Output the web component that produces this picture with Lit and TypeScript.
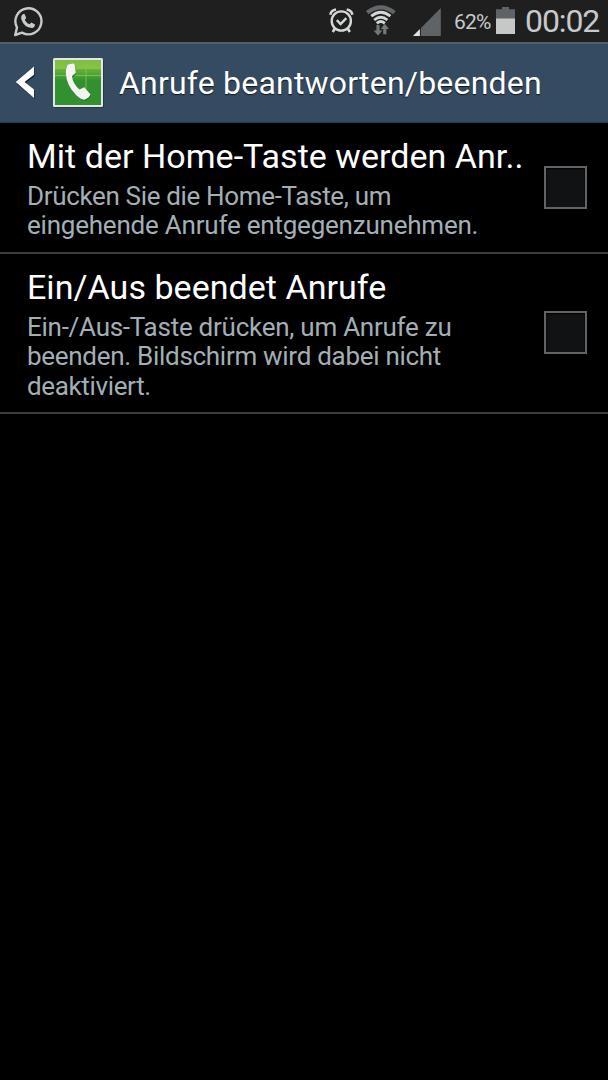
import { LitElement, html, css } from "lit";
import { customElement, property } from "lit/decorators.js";

@customElement("status-bar")
class StatusBar extends LitElement {
  static styles = css`
    :host { display: flex; align-items: flex-start; height: 42px; background: #1f1f1f; color: #c6cacb; }
    svg { display: block; flex: none; }
    .chat { margin: 5px 0 0 12px; }
    .alarm { margin: 7px 0 0 auto; }
    .wifi { margin: 5px 0 0 11px; }
    .signal { margin: 8px 0 0 15px; }
    .percent { width: 37px; margin: 10px 0 0 13px; font-size: 21px; line-height: 25px; letter-spacing: -0.8px; white-space: nowrap; }
    .battery { margin: 7px 0 0 5px; }
    .clock { width: 83px; margin: 2px 0 0 9px; font-size: 32px; line-height: 38px; white-space: nowrap; letter-spacing: -1.1px; }
  `;
  render() {
    return html`
      <svg class="chat" width="32" height="32" viewBox="0 0 32 32" fill="none" stroke="#c6cacb">
        <path d="M3.2 30 L5 22.5 A13 13 0 1 1 10 27.6 Z" stroke-width="2.4" stroke-linejoin="round" />
        <path d="M10.3 9.5 L12.4 8.8 L14.2 12.8 L12.8 15 Q14.3 18 17.6 19.3 L19.4 17.6 L23 19.5 Q22.8 22.7 19.8 23 Q12 22.5 9.2 14 Q8.8 11 10.3 9.5Z" fill="#c6cacb" stroke="none" />
      </svg>
      <svg class="alarm" width="26" height="28" viewBox="0 0 26 28" fill="none" stroke="#d3d7d7">
        <circle cx="12.3" cy="14" r="9.6" stroke-width="2.4" />
        <path d="M7.8 13.2 L11.6 17 L17.3 11.1" stroke-width="2.4" />
        <path d="M1.3 7.7 Q2.2 3.3 7 2.5 M23.4 7.7 Q22.5 3.3 17.7 2.5" stroke-width="2.6" />
        <path d="M5.8 21.5 L3.8 25 M18.8 21.5 L20.8 25" stroke-width="2.6" />
      </svg>
      <svg class="wifi" width="32" height="34" viewBox="0 0 32 34" fill="none">
        <path d="M1.2 7.6 Q14.8 -2.9 28.4 7.6" stroke="#63676a" stroke-width="4" />
        <g stroke="#d3d7d7" stroke-width="2.9">
          <path d="M5.2 11.2 Q14.8 3.4 24.4 11.2" />
          <path d="M8.2 15 Q14.8 9.4 21.4 15" />
          <path d="M10.8 18.4 Q14.8 14.8 18.8 18.4" />
        </g>
        <path d="M10.4 20h3.2v5.4h2.8l-4.4 5.2-4.4-5.2h2.8zM17.2 29.2v-5.2h-2.6l4.2-5.2 4.2 5.2h-2.6v5.2z" fill="#74787a" />
      </svg>
      <svg class="signal" width="28" height="29" viewBox="0 0 28 29">
        <path d="M0 28 L27.8 0 V28Z" fill="#606365" />
        <path d="M0 28 L7 21 V28Z" fill="#e0e2e2" />
        <path d="M7.4 20V28" stroke="#1f1f1f" />
      </svg>
      <span class="percent">62%</span>
      <svg class="battery" width="20" height="28" viewBox="0 0 20 28">
        <path d="M0 2.3H6V0H13V2.3H19V12H0Z" fill="#606365" />
        <path d="M0 11.5H19V27H0Z" fill="#c6c8c8" />
      </svg>
      <span class="clock">00:02</span>
    `;
  }
}

@customElement("title-bar")
class TitleBar extends LitElement {
  @property() heading = "";
  static styles = css`
    :host { display: flex; align-items: flex-start; box-sizing: border-box; height: 81px; background: #354b61; border-top: 2px solid #525e68; border-bottom: 1px solid #25384b; }
    svg { display: block; flex: none; }
    .back { margin: 21px 0 0 15px; }
    .app { margin: 13px 0 0 17px; }
    .heading { margin: 19px 0 0 15px; color: #fff; font-size: 32px; line-height: 40px; letter-spacing: 0.2px; white-space: nowrap; text-shadow: 0 1px 1px #101820; }
  `;
  render() {
    return html`
      <svg class="back" width="21" height="35" viewBox="0 0 21 35">
        <path d="M19.6 2.8 V11 L10.5 18.2 L19.6 25.5 V34 L1.4 18.2Z" fill="#18222d" />
        <path d="M19 1.5 V9.7 L9.5 17 L19 24.6 V33 L.8 17Z" fill="#fff" />
      </svg>
      <svg class="app" width="51" height="52" viewBox="0 0 51 52">
        <defs>
          <linearGradient id="top" x2="0" y2="1"><stop stop-color="#7fbd44" /><stop offset="1" stop-color="#86c545" /></linearGradient>
          <linearGradient id="mid" x2="0" y2="1"><stop stop-color="#6ab23c" /><stop offset="1" stop-color="#359330" /></linearGradient>
        </defs>
        <rect x="1" y="2" width="50" height="49" rx="2" fill="#263747" />
        <rect x="0" y="1" width="50" height="49" rx="1.5" fill="#e4e6e3" />
        <rect x="2" y="3" width="46" height="45" fill="#339030" />
        <rect x="2" y="3" width="46" height="10" fill="url(#top)" />
        <rect x="2" y="12" width="46" height="11" fill="url(#mid)" />
        <path d="M2 18.5H48 M33 7V41" stroke="#8bcc4c" stroke-width="1" opacity=".75" />
        <path d="M15 8 L20.5 7 Q22 7 22.2 9 L23 17 L19.5 20.5 Q20.5 28 26.8 33.5 L31.5 31.5 L37.5 38 Q38 39.5 36.5 41 L33 43.5 Q29 44.5 23.5 39 Q13.5 29 12.8 16 Q12.6 10 15 8Z" fill="#24772a" />
        <path d="M15 7.5 L20 6.5 Q21.5 6.5 21.8 8 L22.8 16 L19 19 Q19.8 27 26.5 32.5 L31.3 30.3 L37.5 37.5 L35.5 40.5 L32 42.5 Q28.5 43.5 23 38 Q13.3 28 12.8 16 Q12.8 10 15 7.5Z" fill="#f4f5f3" />
      </svg>
      <span class="heading">${this.heading}</span>
    `;
  }
}

@customElement("check-row")
class CheckRow extends LitElement {
  @property() heading = "";
  @property({ attribute: false }) lines: [string, number][] = [];
  static styles = css`
    :host { display: flex; align-items: center; box-sizing: border-box; padding: 13px 21px 11px 27px; border-bottom: 2px solid #3c3c3c; }
    .copy { flex: 1; min-width: 0; }
    .heading { color: #fff; font-size: 34px; line-height: 40px; letter-spacing: 0.04px; white-space: nowrap; }
    .summary { margin-top: 6px; color: #a3afb5; font-size: 26px; line-height: 29.4px; white-space: nowrap; }
    .box { flex: none; box-sizing: border-box; width: 43px; height: 43px; margin-top: -2px; border: 2px solid #626364; background: #111214; box-shadow: inset 0 1px 2px #000; }
  `;
  render() {
    return html`
      <div class="copy">
        <div class="heading">${this.heading}</div>
        <div class="summary">
          ${this.lines.map(([line, tracking]) => html`<div style="letter-spacing:${tracking}px">${line}</div>`)}
        </div>
      </div>
      <div class="box" role="checkbox" aria-checked="false"></div>
    `;
  }
}

@customElement("app-root")
class AppRoot extends LitElement {
  static styles = css`
    :host { display: block; width: 608px; height: 1080px; overflow: hidden; background: #000; font-family: Roboto, sans-serif; }
  `;
  render() {
    return html`
      <status-bar></status-bar>
      <title-bar heading="Anrufe beantworten/beenden"></title-bar>
      <check-row heading="Mit der Home-Taste werden Anr.." .lines=${[["Drücken Sie die Home-Taste, um", -0.34], ["eingehende Anrufe entgegenzunehmen.", -0.22]]}></check-row>
      <check-row heading="Ein/Aus beendet Anrufe" .lines=${[["Ein-/Aus-Taste drücken, um Anrufe zu", -0.26], ["beenden. Bildschirm wird dabei nicht", -0.29], ["deaktiviert.", -0.36]]}></check-row>
    `;
  }
}
